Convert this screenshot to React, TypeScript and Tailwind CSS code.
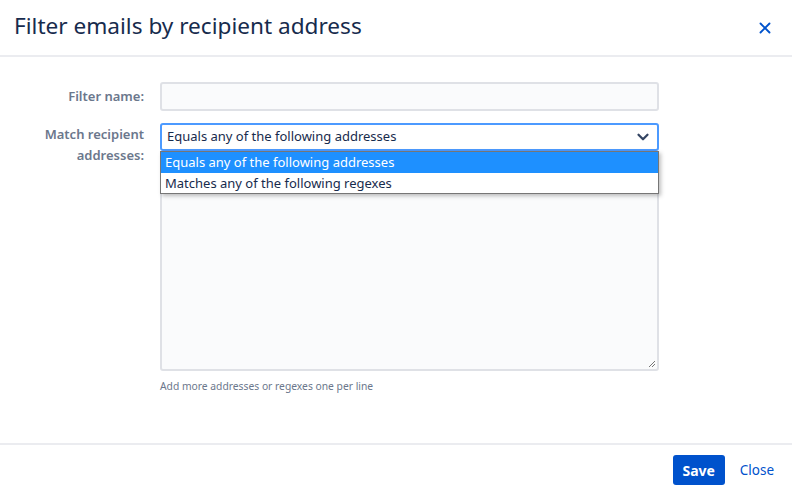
import { ChevronDown, X } from 'lucide-react';

const font = { fontFamily: '"Noto Sans", "Segoe UI", sans-serif' };

const App = () => {
    return (
        <div className="w-[792px] h-[492px] bg-white flex flex-col text-[#172b4d]" style={font}>
            <div className="h-[57px] flex items-center justify-between pl-[14px] pr-[18px] border-b-2 border-[#ebecf0]">
                <h1 className="text-[22.6px] leading-none text-[#172b4d] pb-[2px]">Filter emails by recipient address</h1>
                <X className="w-[18px] h-[18px] text-[#0052cc]" strokeWidth={2.5} />
            </div>

            <div className="flex-1 pt-[25px]">
                <div className="flex items-center gap-4">
                    <label className="w-[144px] text-right text-[13px] font-semibold text-[#6b778c]">Filter name:</label>
                    <div className="w-[499px] h-[29px] bg-[#fafbfc] border-2 border-[#dfe1e6] rounded-[3px]"></div>
                </div>

                <div className="flex gap-4 mt-[12px]">
                    <label className="w-[144px] text-right text-[13px] leading-[21px] font-semibold text-[#6b778c] pt-[1px]">
                        Match recipient<br />addresses:
                    </label>
                    <div className="w-[499px] relative">
                        <div className="h-[28px] bg-white border-2 border-[#4c9aff] rounded-[3px] flex items-center justify-between pl-[5px] pr-[5px]">
                            <span className="text-[13px] text-[#172b4d]">Equals any of the following addresses</span>
                            <ChevronDown className="w-[18px] h-[18px] text-[#344563]" strokeWidth={3} />
                        </div>
                        <div className="h-[210px] mt-[10px] bg-[#fafbfc] border-2 border-[#dfe1e6] rounded-[3px] relative">
                            <svg className="absolute right-[1px] bottom-[1px]" width="9" height="9" viewBox="0 0 9 9">
                                <path d="M8 2 L2 8 M8 5 L5 8" stroke="#777" strokeWidth="1" />
                            </svg>
                        </div>
                        <p className="text-[10.3px] text-[#6b778c] mt-[8px]">Add more addresses or regexes one per line</p>

                        <div className="absolute left-0 top-[28px] w-[499px] bg-white border border-[#767676] shadow-[2px_2px_4px_rgba(0,0,0,0.25)]">
                            <div className="h-[21px] bg-[#1e90ff] text-white text-[13px] leading-[21px] pl-[4px]">Equals any of the following addresses</div>
                            <div className="h-[20px] text-[#172b4d] text-[13px] leading-[20px] pl-[4px]">Matches any of the following regexes</div>
                        </div>
                    </div>
                </div>
            </div>

            <div className="h-[49px] border-t-2 border-[#ebecf0] flex items-start justify-end gap-[15px] pr-[18px] pt-[10px]">
                <button className="h-[30px] w-[52px] bg-[#0052cc] text-white text-[14px] font-bold rounded-[3px]">Save</button>
                <button className="h-[30px] text-[#0052cc] text-[13.5px]">Close</button>
            </div>
        </div>
    );
};

export default App;
